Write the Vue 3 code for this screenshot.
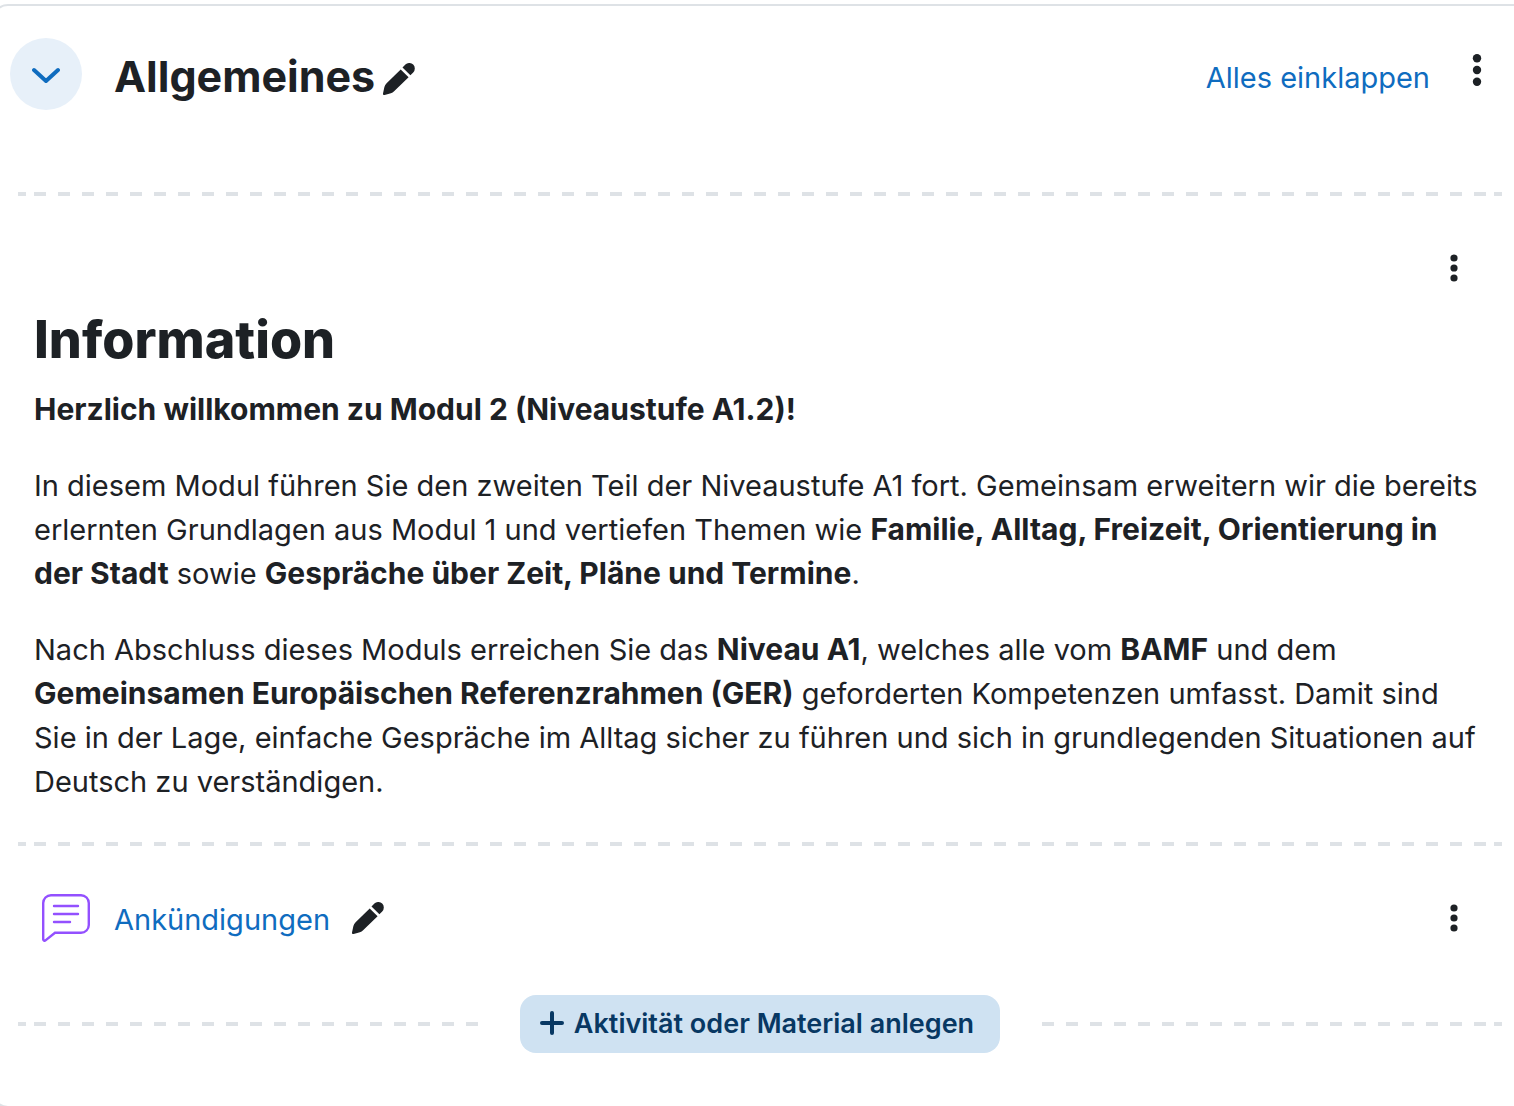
<script setup>
import { ref } from 'vue'

const open = ref(true)
</script>

<template>
  <main class="page">
    <section class="card">
      <header class="head">
        <button class="toggle" type="button" aria-label="Einklappen" :aria-expanded="open" @click="open = !open">
          <svg width="28" height="20" viewBox="0 0 28 20">
            <path d="M2 6 L14 17 L26 6" />
          </svg>
        </button>
        <h3>Allgemeines</h3>
        <button class="icon pen" type="button" aria-label="Abschnittsname bearbeiten">
          <svg width="32" height="32" viewBox="0 0 32 32">
            <path d="M22.4 1.6a5.5 5.5 0 0 1 7.8 7.8l-2.8 2.9-7.9-7.8z" />
            <path d="M17.7 6.4l7.9 7.9-14.5 13.9a8 8 0 0 1-3.2 2L1.6 32A1.3 1.3 0 0 1 0 30.4l1.4-6.5a8 8 0 0 1 2.2-3.6z" />
          </svg>
        </button>
        <a class="collapse" href="#">Alles einklappen</a>
        <button class="icon menu" type="button" aria-label="Bearbeiten">
          <svg width="10" height="32" viewBox="0 0 10 32">
            <circle cx="5" cy="4.2" r="4.2" />
            <circle cx="5" cy="16" r="4.2" />
            <circle cx="5" cy="27.8" r="4.2" />
          </svg>
        </button>
      </header>

      <div v-show="open">
        <div class="divider"></div>

        <article class="info">
          <button class="icon more" type="button" aria-label="Bearbeiten">
            <svg width="8" height="28" viewBox="0 0 8 28">
              <circle cx="4" cy="4" r="3.6" />
              <circle cx="4" cy="14" r="3.6" />
              <circle cx="4" cy="24" r="3.6" />
            </svg>
          </button>
          <h1>Information</h1>
          <p><strong>Herzlich willkommen zu Modul 2 (Niveaustufe A1.2)!</strong></p>
          <p>
            In diesem Modul führen Sie den zweiten Teil der Niveaustufe A1 fort. Gemeinsam erweitern wir die bereits
            erlernten Grundlagen aus Modul 1 und vertiefen Themen wie
            <strong>Familie, Alltag, Freizeit, Orientierung in der Stadt</strong> sowie
            <strong>Gespräche über Zeit, Pläne und Termine</strong>.
          </p>
          <p>
            Nach Abschluss dieses Moduls erreichen Sie das <strong>Niveau A1</strong>, welches alle vom
            <strong>BAMF</strong> und dem <strong>Gemeinsamen Europäischen Referenzrahmen (GER)</strong> geforderten
            Kompetenzen umfasst. Damit sind Sie in der Lage, einfache Gespräche im Alltag sicher zu führen und sich in
            grundlegenden Situationen auf Deutsch zu verständigen.
          </p>
        </article>

        <div class="divider"></div>

        <div class="activity">
          <svg class="forum" width="48" height="48" viewBox="0 0 48 48">
            <path d="M9 1.2h30a7.8 7.8 0 0 1 7.8 7.8v22a7.8 7.8 0 0 1-7.8 7.8H13L3.5 46.4A1.4 1.4 0 0 1 1.2 45.4V9A7.8 7.8 0 0 1 9 1.2z" />
            <path d="M12 12h24M12 20h24M12 28h16" />
          </svg>
          <a href="#">Ankündigungen</a>
          <button class="icon pen" type="button" aria-label="Titel bearbeiten">
            <svg width="32" height="32" viewBox="0 0 32 32">
              <path d="M22.4 1.6a5.5 5.5 0 0 1 7.8 7.8l-2.8 2.9-7.9-7.8z" />
              <path d="M17.7 6.4l7.9 7.9-14.5 13.9a8 8 0 0 1-3.2 2L1.6 32A1.3 1.3 0 0 1 0 30.4l1.4-6.5a8 8 0 0 1 2.2-3.6z" />
            </svg>
          </button>
          <button class="icon more" type="button" aria-label="Bearbeiten">
            <svg width="8" height="28" viewBox="0 0 8 28">
              <circle cx="4" cy="4" r="3.6" />
              <circle cx="4" cy="14" r="3.6" />
              <circle cx="4" cy="24" r="3.6" />
            </svg>
          </button>
        </div>

        <div class="divider add-row">
          <div class="add-wrap">
            <button class="add" type="button">
              <svg width="24" height="28" viewBox="0 0 24 28">
                <path d="M12 3v20M2 13h20" />
              </svg>
              Aktivität oder Material anlegen
            </button>
          </div>
        </div>
      </div>
    </section>
  </main>
</template>

<style>
body {
  margin: 0;
  background: #fff;
}
</style>

<style scoped>
.page {
  height: 100vh;
  box-sizing: border-box;
  padding-top: 4px;
  overflow: hidden;
  font-family: Inter, "Liberation Sans", sans-serif;
  font-size: 29px;
  line-height: 44px;
  color: #1d2125;
}

/* the card runs past both sides of the window */
.card {
  margin: 0 -30px 0 -8px;
  padding: 32px 40px 53px 16px;
  border: 2px solid #dee2e6;
  border-radius: 16px;
}

button {
  border: 0;
  padding: 0;
  font: inherit;
  color: inherit;
  background: none;
  cursor: pointer;
}

a {
  color: #0f6cbf;
  text-decoration: none;
}

h1,
h3,
p {
  margin: 0;
}

strong {
  font-size: 30px;
  line-height: 40px;
}

.icon {
  display: flex;
  flex: none;
  fill: #1d2125;
}

.head {
  display: flex;
  align-items: center;
  height: 72px;
  margin-bottom: 82px;
}

.toggle {
  display: flex;
  align-items: center;
  justify-content: center;
  width: 72px;
  height: 72px;
  margin-right: 32px;
  border-radius: 50%;
  background: #e7f0f9;
}

.toggle svg {
  fill: none;
  stroke: #0f6cbf;
  stroke-width: 4;
  stroke-linecap: round;
  stroke-linejoin: round;
}

.head h3 {
  padding-top: 4px;
  font-size: 43px;
  font-weight: 700;
}

.head .pen {
  margin: 10px 0 0 8px;
}

.collapse {
  margin: 8px 42px 0 auto;
}

.menu {
  margin: 0 20px 8px 0;
}

.divider {
  height: 4px;
  margin-left: 8px;
  padding: 0 16px;
  background:
    linear-gradient(#dee2e6, #dee2e6) left center / 8px 4px no-repeat border-box,
    linear-gradient(#dee2e6, #dee2e6) right center / 8px 4px no-repeat border-box,
    linear-gradient(90deg, #dee2e6 50%, transparent 50%) left center / 24px 4px repeat-x content-box;
}

.info {
  padding: 58px 22px 38px 24px;
}

.more {
  margin: 0 22px 0 auto;
}

h1 {
  margin: 26px 0 16px;
  font-size: 52px;
  line-height: 64px;
  font-weight: 800;
}

p + p {
  margin-top: 32px;
}

.activity {
  display: flex;
  align-items: center;
  height: 48px;
  padding: 48px 22px 53px 32px;
}

.activity a {
  padding-top: 4px;
}

.forum {
  margin-right: 24px;
  fill: none;
  stroke: #9350ff;
  stroke-width: 2.4;
  stroke-linecap: round;
}

.activity .pen {
  margin-left: 22px;
}

.add-row {
  display: flex;
  justify-content: center;
  height: 58px;
}

.add-wrap {
  padding: 0 40px;
  background: #fff;
}

.add {
  display: flex;
  align-items: center;
  gap: 10px;
  height: 58px;
  padding: 0 26px 0 20px;
  border-radius: 16px;
  background: #cfe2f2;
  color: #083863;
  font-size: 27px;
  font-weight: 600;
}

.add svg {
  fill: none;
  stroke: #083863;
  stroke-width: 4;
  stroke-linecap: round;
}
</style>
